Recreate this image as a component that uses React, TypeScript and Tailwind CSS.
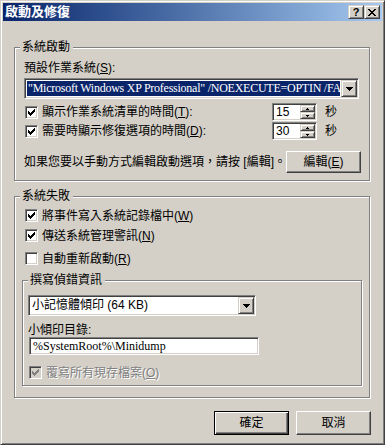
import type { ReactNode } from 'react';

const CHECK = ['......#', '.....##', '#...###', '##.###.', '#####..', '.###...', '..#....'];
const CLOSE_X = ['##....##', '.##..##.', '..####..', '...##...', '..####..', '.##..##.', '##....##'];
const ARROW_DOWN = ['#######', '.#####.', '..###..', '...#...'];
const TINY_UP = ['.#.', '###'];
const TINY_DOWN = ['###', '.#.'];

const SUNKEN =
  'border border-t-[#808080] border-l-[#808080] border-r-white border-b-white shadow-[inset_1px_1px_0_#404040,inset_-1px_-1px_0_#d4d0c8]';
const RAISED =
  'border border-t-[#d4d0c8] border-l-[#d4d0c8] border-r-[#404040] border-b-[#404040] shadow-[inset_1px_1px_0_#fff,inset_-1px_-1px_0_#808080]';

function Pixels({ rows, color }: { rows: string[]; color: string }) {
  const w = rows[0].length;
  const h = rows.length;
  return (
    <svg width={w} height={h} viewBox={`0 0 ${w} ${h}`} shapeRendering="crispEdges" className="block">
      {rows.flatMap((r, y) =>
        r.split('').map((c, x) =>
          c === '#' ? <rect key={`${x}-${y}`} x={x} y={y} width={1} height={1} fill={color} /> : null,
        ),
      )}
    </svg>
  );
}

function Group({ label, className, children }: { label: string; className: string; children: ReactNode }) {
  return (
    <div className={`relative flex flex-col shrink-0 border border-[#808080] shadow-[inset_1px_1px_0_#fff,1px_1px_0_#fff] ${className}`}>
      <span className="absolute -top-[8px] left-[5px] bg-[#d4d0c8] pl-[2px] pr-[3px] leading-[14px]">{label}</span>
      {children}
    </div>
  );
}

function CheckBox({ checked, disabled }: { checked?: boolean; disabled?: boolean }) {
  return (
    <div
      className={`w-[13px] h-[13px] shrink-0 flex items-center justify-center ${SUNKEN} ${
        disabled ? 'bg-[#d4d0c8]' : 'bg-white'
      }`}
    >
      {checked && <Pixels rows={CHECK} color={disabled ? '#808080' : '#000'} />}
    </div>
  );
}

function DropButton() {
  return (
    <div className={`w-[16px] h-full shrink-0 flex items-center justify-center bg-[#d4d0c8] ${RAISED}`}>
      <Pixels rows={ARROW_DOWN} color="#000" />
    </div>
  );
}

function Combo({ children, selected, className }: { children: ReactNode; selected?: boolean; className: string }) {
  return (
    <div className={`flex h-[21px] bg-white p-[1px] shrink-0 ${SUNKEN} ${className}`}>
      <div className="flex-1 min-w-0 p-[1px]">
        <div
          className={`h-full overflow-hidden whitespace-nowrap pl-[1px] leading-[15px] ${
            selected ? 'bg-[#0a246a] text-white' : ''
          }`}
        >
          {children}
        </div>
      </div>
      <DropButton />
    </div>
  );
}

function SpinButton({ up }: { up?: boolean }) {
  return (
    <div className={`h-[7px] flex items-center justify-center bg-[#d4d0c8] ${RAISED}`}>
      <Pixels rows={up ? TINY_UP : TINY_DOWN} color="#000" />
    </div>
  );
}

function Spin({ value }: { value: string }) {
  return (
    <div className={`flex w-[45px] h-[18px] bg-white p-[1px] shrink-0 ${SUNKEN}`}>
      <div className="flex-1 pl-[2px] leading-[14px]">{value}</div>
      <div className="flex flex-col w-[15px]">
        <SpinButton up />
        <SpinButton />
      </div>
    </div>
  );
}

function PushButton({ children, isDefault, className = '' }: { children: ReactNode; isDefault?: boolean; className?: string }) {
  return (
    <div
      className={`flex items-center justify-center bg-[#d4d0c8] shrink-0 ${
        isDefault
          ? 'border border-black shadow-[inset_1px_1px_0_#fff,inset_-1px_-1px_0_#404040,inset_-2px_-2px_0_#808080]'
          : 'border border-t-white border-l-white border-r-[#404040] border-b-[#404040] shadow-[inset_-1px_-1px_0_#808080]'
      } ${className}`}
    >
      {children}
    </div>
  );
}

function CheckRow({ children, checked, disabled, className }: { children: ReactNode; checked?: boolean; disabled?: boolean; className: string }) {
  return (
    <div className={`flex items-center h-[13px] gap-[4px] ${className}`}>
      <CheckBox checked={checked} disabled={disabled} />
      <span className={`whitespace-nowrap ${disabled ? 'text-[#808080] [text-shadow:1px_1px_0_#fff]' : ''}`}>{children}</span>
    </div>
  );
}

export default function App() {
  return (
    <div className="w-[385px] h-[445px] flex flex-col bg-[#d4d0c8] border border-t-[#d4d0c8] border-l-[#d4d0c8] border-r-[#404040] border-b-[#404040] shadow-[inset_1px_1px_0_#fff,inset_-1px_-1px_0_#808080] p-[2px] text-[12px] leading-[14px] text-black font-['Liberation_Sans','Noto_Sans_CJK_TC',sans-serif]">
      {/* Title bar */}
      <div className="h-[18px] shrink-0 flex items-center justify-between bg-linear-to-r from-[#0a246a] to-[#a6caf0] pl-[2px] pr-[2px]">
        <span className="text-white font-bold text-[13px] leading-[16px]">啟動及修復</span>
        <div className="flex">
          <div className={`w-[16px] h-[14px] flex items-center justify-center bg-[#d4d0c8] ${RAISED}`}>
            <span className="font-bold text-[11px] leading-[10px]">?</span>
          </div>
          <div className={`w-[16px] h-[14px] flex items-center justify-center bg-[#d4d0c8] ${RAISED}`}>
            <Pixels rows={CLOSE_X} color="#000" />
          </div>
        </div>
      </div>

      {/* System startup */}
      <Group label="系統啟動" className="ml-[11px] mt-[26px] w-[356px] h-[134px]">
        <div className="ml-[9px] mt-[13px] h-[14px] whitespace-nowrap">
          預設作業系統(<u>S</u>):
        </div>
        <Combo selected className="ml-[9px] mt-[3px] w-[335px]">
          <span className="font-['Liberation_Serif',serif] tracking-[-0.25px]">"Microsoft Windows XP Professional" /NOEXECUTE=OPTIN /FA</span>
        </Combo>
        <div className="flex items-center h-[18px] mt-[4px] ml-[10px]">
          <CheckBox checked />
          <span className="ml-[4px] w-[230px] whitespace-nowrap">顯示作業系統清單的時間(<u>T</u>):</span>
          <Spin value="15" />
          <span className="ml-[8px]">秒</span>
        </div>
        <div className="flex items-center h-[18px] mt-[1px] ml-[10px]">
          <CheckBox checked />
          <span className="ml-[4px] w-[230px] whitespace-nowrap">需要時顯示修復選項的時間(<u>D</u>):</span>
          <Spin value="30" />
          <span className="ml-[8px]">秒</span>
        </div>
        <div className="flex items-center mt-[11px] h-[22px]">
          <span className="ml-[9px] whitespace-nowrap">如果您要以手動方式編輯啟動選項，請按 [編輯]。</span>
          <PushButton className="ml-auto mr-[8px] w-[75px] h-[22px]">
            編輯(<u>E</u>)
          </PushButton>
        </div>
      </Group>

      {/* System failure */}
      <Group label="系統失敗" className="ml-[11px] mt-[15px] w-[356px] h-[202px]">
        <CheckRow checked className="ml-[10px] mt-[12px]">
          將事件寫入系統記錄檔中(<u>W</u>)
        </CheckRow>
        <CheckRow checked className="ml-[10px] mt-[7px]">
          傳送系統管理警訊(<u>N</u>)
        </CheckRow>
        <CheckRow className="ml-[10px] mt-[10px]">
          自動重新啟動(<u>R</u>)
        </CheckRow>

        <Group label="撰寫偵錯資訊" className="ml-[7px] mt-[15px] w-[340px] h-[106px]">
          <Combo className="ml-[5px] mt-[14px] w-[228px]">小記憶體傾印 (64 KB)</Combo>
          <div className="ml-[5px] mt-[7px] h-[14px] whitespace-nowrap">小傾印目錄:</div>
          <div className={`ml-[6px] w-[230px] h-[18px] bg-white p-[1px] pl-[3px] leading-[14px] font-['Liberation_Serif',serif] ${SUNKEN}`}>
            %SystemRoot%\Minidump
          </div>
          <CheckRow checked disabled className="ml-[6px] mt-[11px]">
            覆寫所有現存檔案(<u>O</u>)
          </CheckRow>
        </Group>
      </Group>

      {/* Dialog buttons */}
      <div className="flex justify-end gap-[7px] mt-[13px] pr-[11px]">
        <PushButton isDefault className="w-[75px] h-[24px]">
          確定
        </PushButton>
        <PushButton className="w-[75px] h-[24px]">取消</PushButton>
      </div>
    </div>
  );
}
